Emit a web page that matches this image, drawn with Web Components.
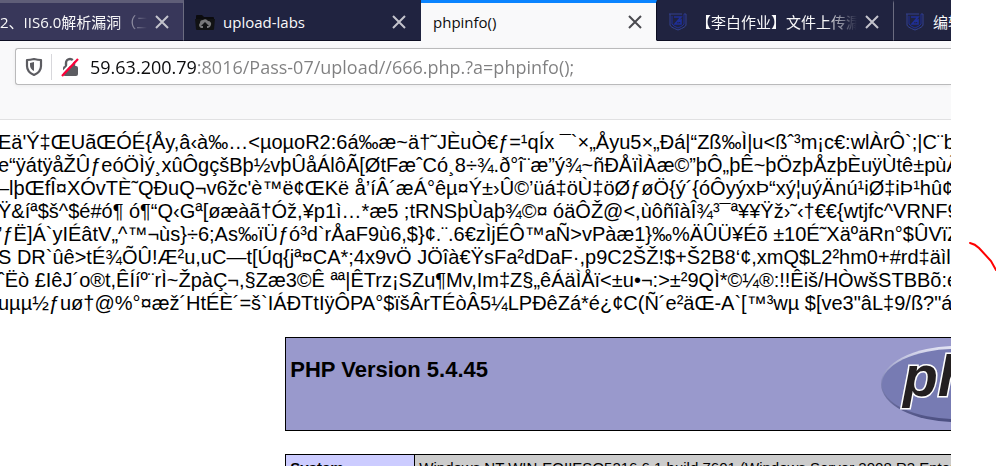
<!DOCTYPE html>
<html lang="en">
<head>
<meta charset="utf-8">
<title>phpinfo()</title>
<style>
  html, body { height: 100%; margin: 0; }
  body { background: #fff; overflow: hidden; font-family: "Liberation Sans", Arial, sans-serif; }
</style>
</head>
<body>
<app-shot></app-shot>

<script>
// small helper, every element clones its own template
const make = (html) => {
  const t = document.createElement('template');
  t.innerHTML = html;
  return t;
};

const define = (name, html) => {
  const tpl = make(html);
  customElements.define(name, class extends HTMLElement {
    constructor() {
      super();
      this.attachShadow({ mode: 'open' }).append(tpl.content.cloneNode(true));
    }
  });
};

// ===== Tab =====
define('browser-tab', /*html*/`
  <style>
    :host {
      flex: 0 0 237px; box-sizing: border-box;
      display: flex; align-items: center; gap: 8px;
      padding: 0 14px 0 11px;
      border-top: 3px solid transparent;
      border-right: 1px solid #6b6c80;
      border-bottom: 1px solid #0d0e22;
      color: #f9f9fa; --x: #c3c3cc;
      overflow: hidden;
    }
    :host([cut]) { flex-basis: 184px; padding-left: 0; background: #38375a; border-top-color: #5f5e78; }
    :host([plain]) { border-right-color: #202340; }
    :host([active]) {
      flex-basis: 236px;
      background: #f9f9fa; color: #0c0c0d; --x: #4a4a4f;
      border-color: #0a84ff #0d0e22 #f9f9fa; padding-left: 12px;
    }
    .title {
      flex: 1; min-width: 0; overflow: hidden; white-space: nowrap; line-height: 24px;
    }
    :host([fade]) .title {
      -webkit-mask-image: linear-gradient(to left, transparent, #000 32px);
      mask-image: linear-gradient(to left, transparent, #000 32px);
    }
    button { border: 0; padding: 0; background: none; width: 14px; height: 14px; display: flex; }
    svg { stroke: var(--x); stroke-width: 2; fill: none; }
  </style>
  <slot name="icon"></slot>
  <span class="title"><slot></slot></span>
  <button aria-label="Close tab">
    <svg width="14" height="14" viewBox="0 0 14 14"><path d="M1 1l12 12M13 1L1 13"/></svg>
  </button>
`);

// ===== Favicons =====
define('icon-folder', /*html*/`
  <style>:host { display: flex; flex: none; width: 20px; }</style>
  <svg width="20" height="18" viewBox="0 0 20 18">
    <path d="M1 3q0-1 1-1h5l2 2h9q1 0 1 1v2H1z" fill="#0b0b0e"/>
    <path d="M0 6h20l-1 10q0 1-1 1H2q-1 0-1-1z" fill="#111214"/>
    <path d="M6 15a3 3 0 0 1-1-5 3 3 0 0 1 3-3q3-2 5 1a3 3 0 0 1 3 4q-1 3-3 3z" fill="#77777a"/>
    <path d="M10 9l4 4h-2v4H8v-4H6z" fill="#111214"/>
  </svg>
`);

define('icon-shield', /*html*/`
  <style>:host { display: flex; flex: none; width: 20px; justify-content: center; }</style>
  <svg width="18" height="18" viewBox="0 0 18 18" fill="none" stroke="#1f2f96">
    <path d="M0 1h13M1 1v11q0 2 8 5 8-3 8-5V1h-2" stroke-width="1" stroke="#33418f"/>
    <path d="M3 3v8q1 2 6 4 5-2 6-4V1" stroke-width="1"/>
    <path d="M5 4h7L6 11h6V7L9 9" stroke-width="1.6"/>
  </svg>
`);

// ===== Address bar =====
define('address-bar', /*html*/`
  <style>
    :host {
      display: block; padding: 7px 0 34px 15px;
      background: #f9f9fa; border-bottom: 1px solid #e1e1e2;
    }
    .box {
      display: flex; align-items: center; box-sizing: border-box; height: 37px;
      background: #fff; border: 1px solid #bababb; border-right: 0;
      border-radius: 3px 0 0 3px; box-shadow: 0 1px 4px rgba(0, 0, 0, .06);
      padding-left: 9px;
    }
    .sep { width: 1px; height: 26px; background: #d7d7db; margin: 0 9px 0 8px; }
    .lock { margin-right: 11px; }
    input {
      flex: 1; min-width: 0; border: 0; padding: 0; outline: 0; height: 30px;
      font: 18px/30px "Open Sans", "Noto Sans", sans-serif;
      /* host part dark, the rest grey */
      color: transparent;
      background: linear-gradient(to right, #0c0c0d 107px, #7f7f80 107px);
      -webkit-background-clip: text; background-clip: text;
    }
  </style>
  <div class="box">
    <svg width="18" height="20" viewBox="0 0 18 20" fill="none" stroke="#5c5c61">
      <path d="M9 2Q5 3 2 3v6q0 6 7 9 7-3 7-9V3q-3 0-7-1z" stroke-width="2.2" stroke-linejoin="round"/>
      <path d="M9 5v9q-4-2-4-6V6z" fill="#5c5c61" stroke="none"/>
    </svg>
    <span class="sep"></span>
    <svg class="lock" width="18" height="20" viewBox="0 0 18 20" fill="none">
      <rect x="2" y="9" width="15" height="10" rx="2" fill="#5c5c61"/>
      <path d="M5 10V6a4 4 0 0 1 8 0v4" stroke="#5c5c61" stroke-width="2.4"/>
      <path d="M0 17L16 0" stroke="#fff" stroke-width="2"/>
      <path d="M1 19L17 2" stroke="#ff0039" stroke-width="2.2"/>
    </svg>
    <input type="text" aria-label="Address" spellcheck="false" value="59.63.200.79:8016/Pass-07/upload//666.php.?a=phpinfo();">
  </div>
`);

// ===== Raw bytes printed before the phpinfo output =====
define('raw-line', /*html*/`
  <style>
    :host { display: block; white-space: nowrap; font-size: 20px; line-height: 23px; color: #000; }
  </style>
  <slot></slot>
`);

// ===== phpinfo tables =====
define('php-logo', /*html*/`
  <style>:host, svg { display: block; }</style>
  <svg width="150" height="84" viewBox="0 0 150 84">
    <defs>
      <linearGradient id="rim" x1="0" y1="0" x2="0" y2="1">
        <stop offset="0" stop-color="#e4e5f4"/><stop offset=".45" stop-color="#8488b8"/><stop offset="1" stop-color="#4b4e80"/>
      </linearGradient>
    </defs>
    <ellipse cx="75" cy="42" rx="74" ry="38" fill="url(#rim)"/>
    <ellipse cx="75" cy="42" rx="73" ry="35" fill="#777bb3"/>
    <text x="23" y="54" font-family="Liberation Sans, Arial, sans-serif" font-size="57" font-weight="bold"
      font-style="italic" fill="#231f20" stroke="#fff" stroke-width="3" paint-order="stroke">php</text>
  </svg>
`);

define('php-info', /*html*/`
  <style>
    :host { display: block; width: 750px; color: #000; }
    table { width: 100%; border-collapse: collapse; margin: 0 0 23px; }
    td, th { border: 1px solid #000; text-align: left; vertical-align: baseline; font-size: 15px; line-height: 17px; padding: 4px; }
    .head td { background: #9999cc; }
    .row { display: flex; justify-content: space-between; }
    h1 { margin: 15px 0 0; font-size: 22px; line-height: 26px; }
    th { width: 120px; background: #ccccff; }
    .v { background: #ccc; white-space: nowrap; }
  </style>
  <table class="head"><tr><td><div class="row"><h1>PHP Version 5.4.45</h1><php-logo></php-logo></div></td></tr></table>
  <table><tr><th>System</th><td class="v">Windows NT WIN-EQIIESQ5216 6.1 build 7601 (Windows Server 2008 R2 Enterprise</td></tr></table>
`);

// ===== Whole window =====
define('app-shot', /*html*/`
  <style>
    :host { display: grid; grid-template-columns: minmax(0, 1fr) 45px; height: 100vh; overflow: hidden; }
    main { overflow: hidden; min-width: 0; }
    nav {
      display: flex; height: 41px; overflow: hidden; background: #202340;
      font: 15px "Open Sans", "Noto Sans CJK SC", sans-serif;
    }
    .raw { padding: 11px 0 22px; margin-left: -2px; }
    php-info { margin-left: 30%; }
    aside svg { display: block; }
  </style>
  <main>
    <nav>
      <browser-tab cut fade>2、IIS6.0解析漏洞（二）</browser-tab>
      <browser-tab plain><icon-folder slot="icon"></icon-folder>upload-labs</browser-tab>
      <browser-tab active>phpinfo()</browser-tab>
      <browser-tab fade><icon-shield slot="icon"></icon-shield>【李白作业】文件上传漏洞</browser-tab>
      <browser-tab><icon-shield slot="icon"></icon-shield>编辑</browser-tab>
    </nav>
    <address-bar></address-bar>
    <div class="raw">
      <raw-line>Eä'Ý‡ŒUãŒÓÉ{Åy,â‹à‰…&lt;µoµoR2:6á‰æ~ä†˜JÈuÒ€ƒ=¹qÍx ¯\`×„Åyu5×„Ðá|“Zß‰Ì|u&lt;ßˆ³m¡c€:wlÀrÔ\`;|C¨b</raw-line>
      <raw-line>e“ÿátÿåŽÛƒeóÖÌý¸xûÔgçšBþ½vþÛåÁlôÃ[ØtFæˆCó¸8÷¾.ð°î¨æ”ý¾~ñÐÅïÌÀæ©”þÔ„þÊ~þÖzþÅzþÈuÿÙtê±pùÂ</raw-line>
      <raw-line>–lþŒfÎ¤XÓvTÈ˜QÐuQ¬v6žc'è™ë¢ŒKë å’íÂ´æÁ°êµ¤Ý±›Û©’üá‡öÙ‡öØƒøÖ{ý´{óÔyýxÞ“xý¦uýÄnú¹iØ‡iÞ¹hû¢g</raw-line>
      <raw-line>Ÿ&amp;íª$š^$é#ó¶ ó¶“Q‹Gª[øæàã†Óž,¥p1ì…*æ5 ;tRNSþÙaþ¾©¤ óäÔŽ@&lt;,ùôñîàÎ¾³¯ª¥¥Ÿž›˜‹†€€{wtjfc^VRNF9</raw-line>
      <raw-line>’ƒË]Á\`yIÉâtV„^™¬ùs}÷6;As‰ïÜƒó³d\`rÅaF9ù6,$}¢.¨.6€zÌjÉÔ™aÑ&gt;vPàæ1}‰%ÄÛÜ¥Éõ ±10É˜XäºäRn°$ÛVïZ</raw-line>
      <raw-line>S DR\`ûê&gt;tÉ¾ÕÛ!Æ²u,uC—t[Úq{jª¤CA*;4x9vÖ JÖîà€ŸsFa²dDaF·,p9C2ŠŽ!$+Š2B8‘¢,xmQ$L2²hm0+#rd‡äìl</raw-line>
      <raw-line>ˆËò £IêJ´o®t,ÊÍíº¨rÌ~ŽpàÇ¬,§Zæ3©Ê ªª|ÊTrz¡SZu¶Mv,Im‡Z§„êÁäÌÅï&lt;±u•¬:&gt;±²9QÌ*©¼®:!!Êiš/HÒwšSTBBõ:e</raw-line>
      <raw-line>uµµ½ƒuø†@%°¤æž´HtÉÈ´=š\`IÁÐTtIÿÔPA°$ïšÂrTÉòÂ5¼LPÐêZá*é¿¢C(Ñ´e²äŒ-A\`[™³wµ $[ve3"âL‡9/ß?"á</raw-line>
    </div>
    <php-info></php-info>
  </main>
  <aside>
    <!-- red pen stroke in the margin -->
    <svg width="45" height="280" viewBox="0 0 45 280" fill="none" stroke="#f00" stroke-width="2" stroke-linecap="round">
      <path d="M19 243Q24 244 28 248L40 261 45 270"/>
    </svg>
  </aside>
`);
</script>
</body>
</html>
